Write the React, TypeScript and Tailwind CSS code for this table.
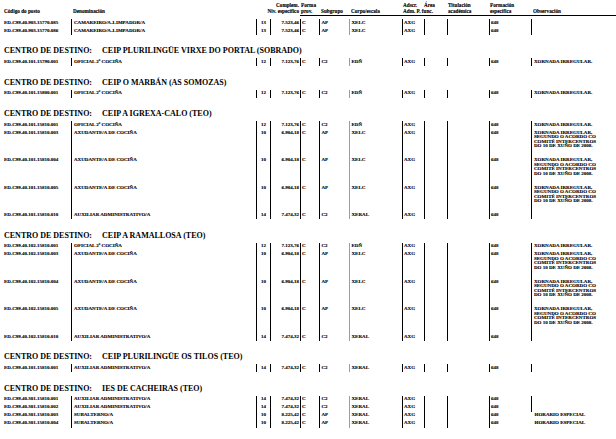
import React from 'react';

type Row = {
  code: string;
  den: string;
  niv: string;
  comp: string;
  forma: string;
  sub: string;
  corpo: string;
  adscr: string;
  form: string;
  obs?: string[];
  tall?: boolean;
  noObsLine?: boolean;
};

type Section = { title?: string; rows: Row[] };

const LONG_OBS = ['XORNADA IRREGULAR,', 'SEGUNDO O ACORDO CO', 'COMITÉ INTERCENTROS', 'DO 10 DE XUÑO DE 2008.'];

const oficial = (code: string): Row => ({
  code, den: 'OFICIAL 2ª COCIÑA', niv: '12', comp: '7.123,76', forma: 'C', sub: 'C2', corpo: 'EDÑ', adscr: 'AXG', form: '648',
  obs: ['XORNADA IRREGULAR.'],
});
const axudante = (code: string): Row => ({
  code, den: 'AXUDANTE/A DE COCIÑA', niv: '10', comp: '6.904,18', forma: 'C', sub: 'AP', corpo: 'XELC', adscr: 'AXG', form: '648',
  obs: LONG_OBS, tall: true,
});
const auxiliar = (code: string): Row => ({
  code, den: 'AUXILIAR ADMINISTRATIVO/A', niv: '14', comp: '7.474,32', forma: 'C', sub: 'C2', corpo: 'XERAL', adscr: 'AXG', form: '648',
});
const subalterno = (code: string): Row => ({
  code, den: 'SUBALTERNO/A', niv: '10', comp: '8.225,42', forma: 'C', sub: 'AP', corpo: 'XERAL', adscr: 'AXG', form: '648',
  obs: ['HORARIO ESPECIAL'], noObsLine: true,
});
const camareiro = (code: string): Row => ({
  code, den: 'CAMAREIRO/A-LIMPADOR/A', niv: '13', comp: '7.523,46', forma: 'C', sub: 'AP', corpo: 'XELC', adscr: 'AXG', form: '648',
});

const sections: Section[] = [
  { rows: [camareiro('ED.C99.40.903.15770.085'), camareiro('ED.C99.40.903.15770.086')] },
  { title: 'CEIP PLURILINGÜE VIRXE DO PORTAL (SOBRADO)', rows: [oficial('ED.C99.40.101.15790.001')] },
  { title: 'CEIP O MARBÁN (AS SOMOZAS)', rows: [oficial('ED.C99.40.101.15800.001')] },
  {
    title: 'CEIP A IGREXA-CALO (TEO)',
    rows: [
      oficial('ED.C99.40.101.15810.001'),
      axudante('ED.C99.40.101.15810.003'),
      axudante('ED.C99.40.101.15810.004'),
      axudante('ED.C99.40.101.15810.005'),
      auxiliar('ED.C99.40.101.15810.010'),
    ],
  },
  {
    title: 'CEIP A RAMALLOSA (TEO)',
    rows: [
      oficial('ED.C99.40.102.15810.001'),
      axudante('ED.C99.40.102.15810.003'),
      axudante('ED.C99.40.102.15810.004'),
      axudante('ED.C99.40.102.15810.005'),
      auxiliar('ED.C99.40.102.15810.010'),
    ],
  },
  { title: 'CEIP PLURILINGÜE OS TILOS (TEO)', rows: [auxiliar('ED.C99.40.101.15810.001')] },
  {
    title: 'IES DE CACHEIRAS (TEO)',
    rows: [
      auxiliar('ED.C99.40.301.15810.001'),
      auxiliar('ED.C99.40.301.15810.002'),
      subalterno('ED.C99.40.301.15810.003'),
      subalterno('ED.C99.40.301.15810.004'),
    ],
  },
];

// column widths follow the printed table rulings
const GRID = 'grid grid-cols-[71px_185px_14px_30px_19px_30px_53px_22px_23px_42px_42px_85px]';
const CELL = 'whitespace-nowrap pt-[1.75px] text-[5px] font-bold leading-[4.5px] [-webkit-text-stroke:0.12px_black]';

const DataRow: React.FC<{ row: Row }> = ({ row }) => (
  <div className={`${GRID} ${row.tall ? 'h-[27.5px]' : 'h-[8px]'}`}>
    <div className={`${CELL} pl-[4px]`}>{row.code}</div>
    <div className={`${CELL} border-l border-black pl-[2px]`}>{row.den}</div>
    <div className={`${CELL} border-l border-black text-center`}>{row.niv}</div>
    <div className={`${CELL} border-l border-black pr-[1px] text-right`}>{row.comp}</div>
    <div className={`${CELL} border-l border-black pl-[1px]`}>{row.forma}</div>
    <div className={`${CELL} border-l border-black pl-[1.5px]`}>{row.sub}</div>
    <div className={`${CELL} border-l border-[#9c9c9c] pl-[1.5px]`}>{row.corpo}</div>
    <div className={`${CELL} border-l border-black pl-[1px]`}>{row.adscr}</div>
    <div className={`${CELL} border-l border-black`} />
    <div className={`${CELL} border-l border-black`} />
    <div className={`${CELL} border-l border-black pl-[1px]`}>{row.form}</div>
    <div className={`${CELL} ${row.noObsLine ? 'pl-[3.5px]' : 'border-l-[1.5px] border-black pl-[2px]'}`}>
      {(row.obs ?? []).map((l) => (
        <div key={l}>{l}</div>
      ))}
    </div>
  </div>
);

const HeaderRow: React.FC = () => (
  <div className={`${GRID} h-[18px] text-[5.2px] font-bold leading-[6.5px] [-webkit-text-stroke:0.12px_black]`}>
    <div className="pl-[4px] pt-[8px] whitespace-nowrap">Código do posto</div>
    <div className="pl-[2px] pt-[8px] whitespace-nowrap">Denominación</div>
    <div className="col-span-2 flex flex-col items-end pt-[1.5px] pr-[1px] whitespace-nowrap">
      <span>Complem.</span>
      <span>Niv. específico</span>
    </div>
    <div className="flex h-[16px] flex-col border-b border-black pl-[1px] pt-[1.5px] whitespace-nowrap">
      <span>Forma</span>
      <span>prov.</span>
    </div>
    <div className="h-[16px] border-b border-black pl-[2px] pt-[8px] whitespace-nowrap">Subgrupo</div>
    <div className="h-[16px] border-b border-black pl-[2px] pt-[8px] whitespace-nowrap">Corpo/escala</div>
    <div className="col-span-2 flex h-[16px] flex-col border-b border-black pl-[1px] pt-[1.5px] whitespace-nowrap">
      <span>
        Adscr.<span className="ml-[7px]">Área</span>
      </span>
      <span>Adm. P. func.</span>
    </div>
    <div className="flex h-[16px] flex-col border-b border-black pl-[1px] pt-[1.5px] whitespace-nowrap">
      <span>Titulación</span>
      <span>académica</span>
    </div>
    <div className="flex h-[16px] flex-col border-b border-black pl-[1px] pt-[1.5px] whitespace-nowrap">
      <span>Formación</span>
      <span>específica</span>
    </div>
    <div className="h-[16px] border-b border-black pl-[2px] pt-[8px] whitespace-nowrap">Observación</div>
  </div>
);

export default function App() {
  return (
    <div
      className="h-[439px] w-[616px] overflow-hidden bg-white text-black"
      style={{ fontFamily: '"Liberation Serif", "Times New Roman", serif' }}
    >
      <HeaderRow />
      {sections.map((s, i) => (
        <div key={i}>
          {s.title && (
            <div className="mt-[12.25px] mb-[3px] flex h-[8px] items-center pl-[4px] text-[8px] font-bold leading-[8px] whitespace-nowrap">
              <span>CENTRO DE DESTINO:</span>
              <span className="ml-[10px]">{s.title}</span>
            </div>
          )}
          <div className={i === 0 ? 'mt-[1px]' : ''}>
            {s.rows.map((r) => (
              <DataRow key={r.code} row={r} />
            ))}
          </div>
        </div>
      ))}
    </div>
  );
}
